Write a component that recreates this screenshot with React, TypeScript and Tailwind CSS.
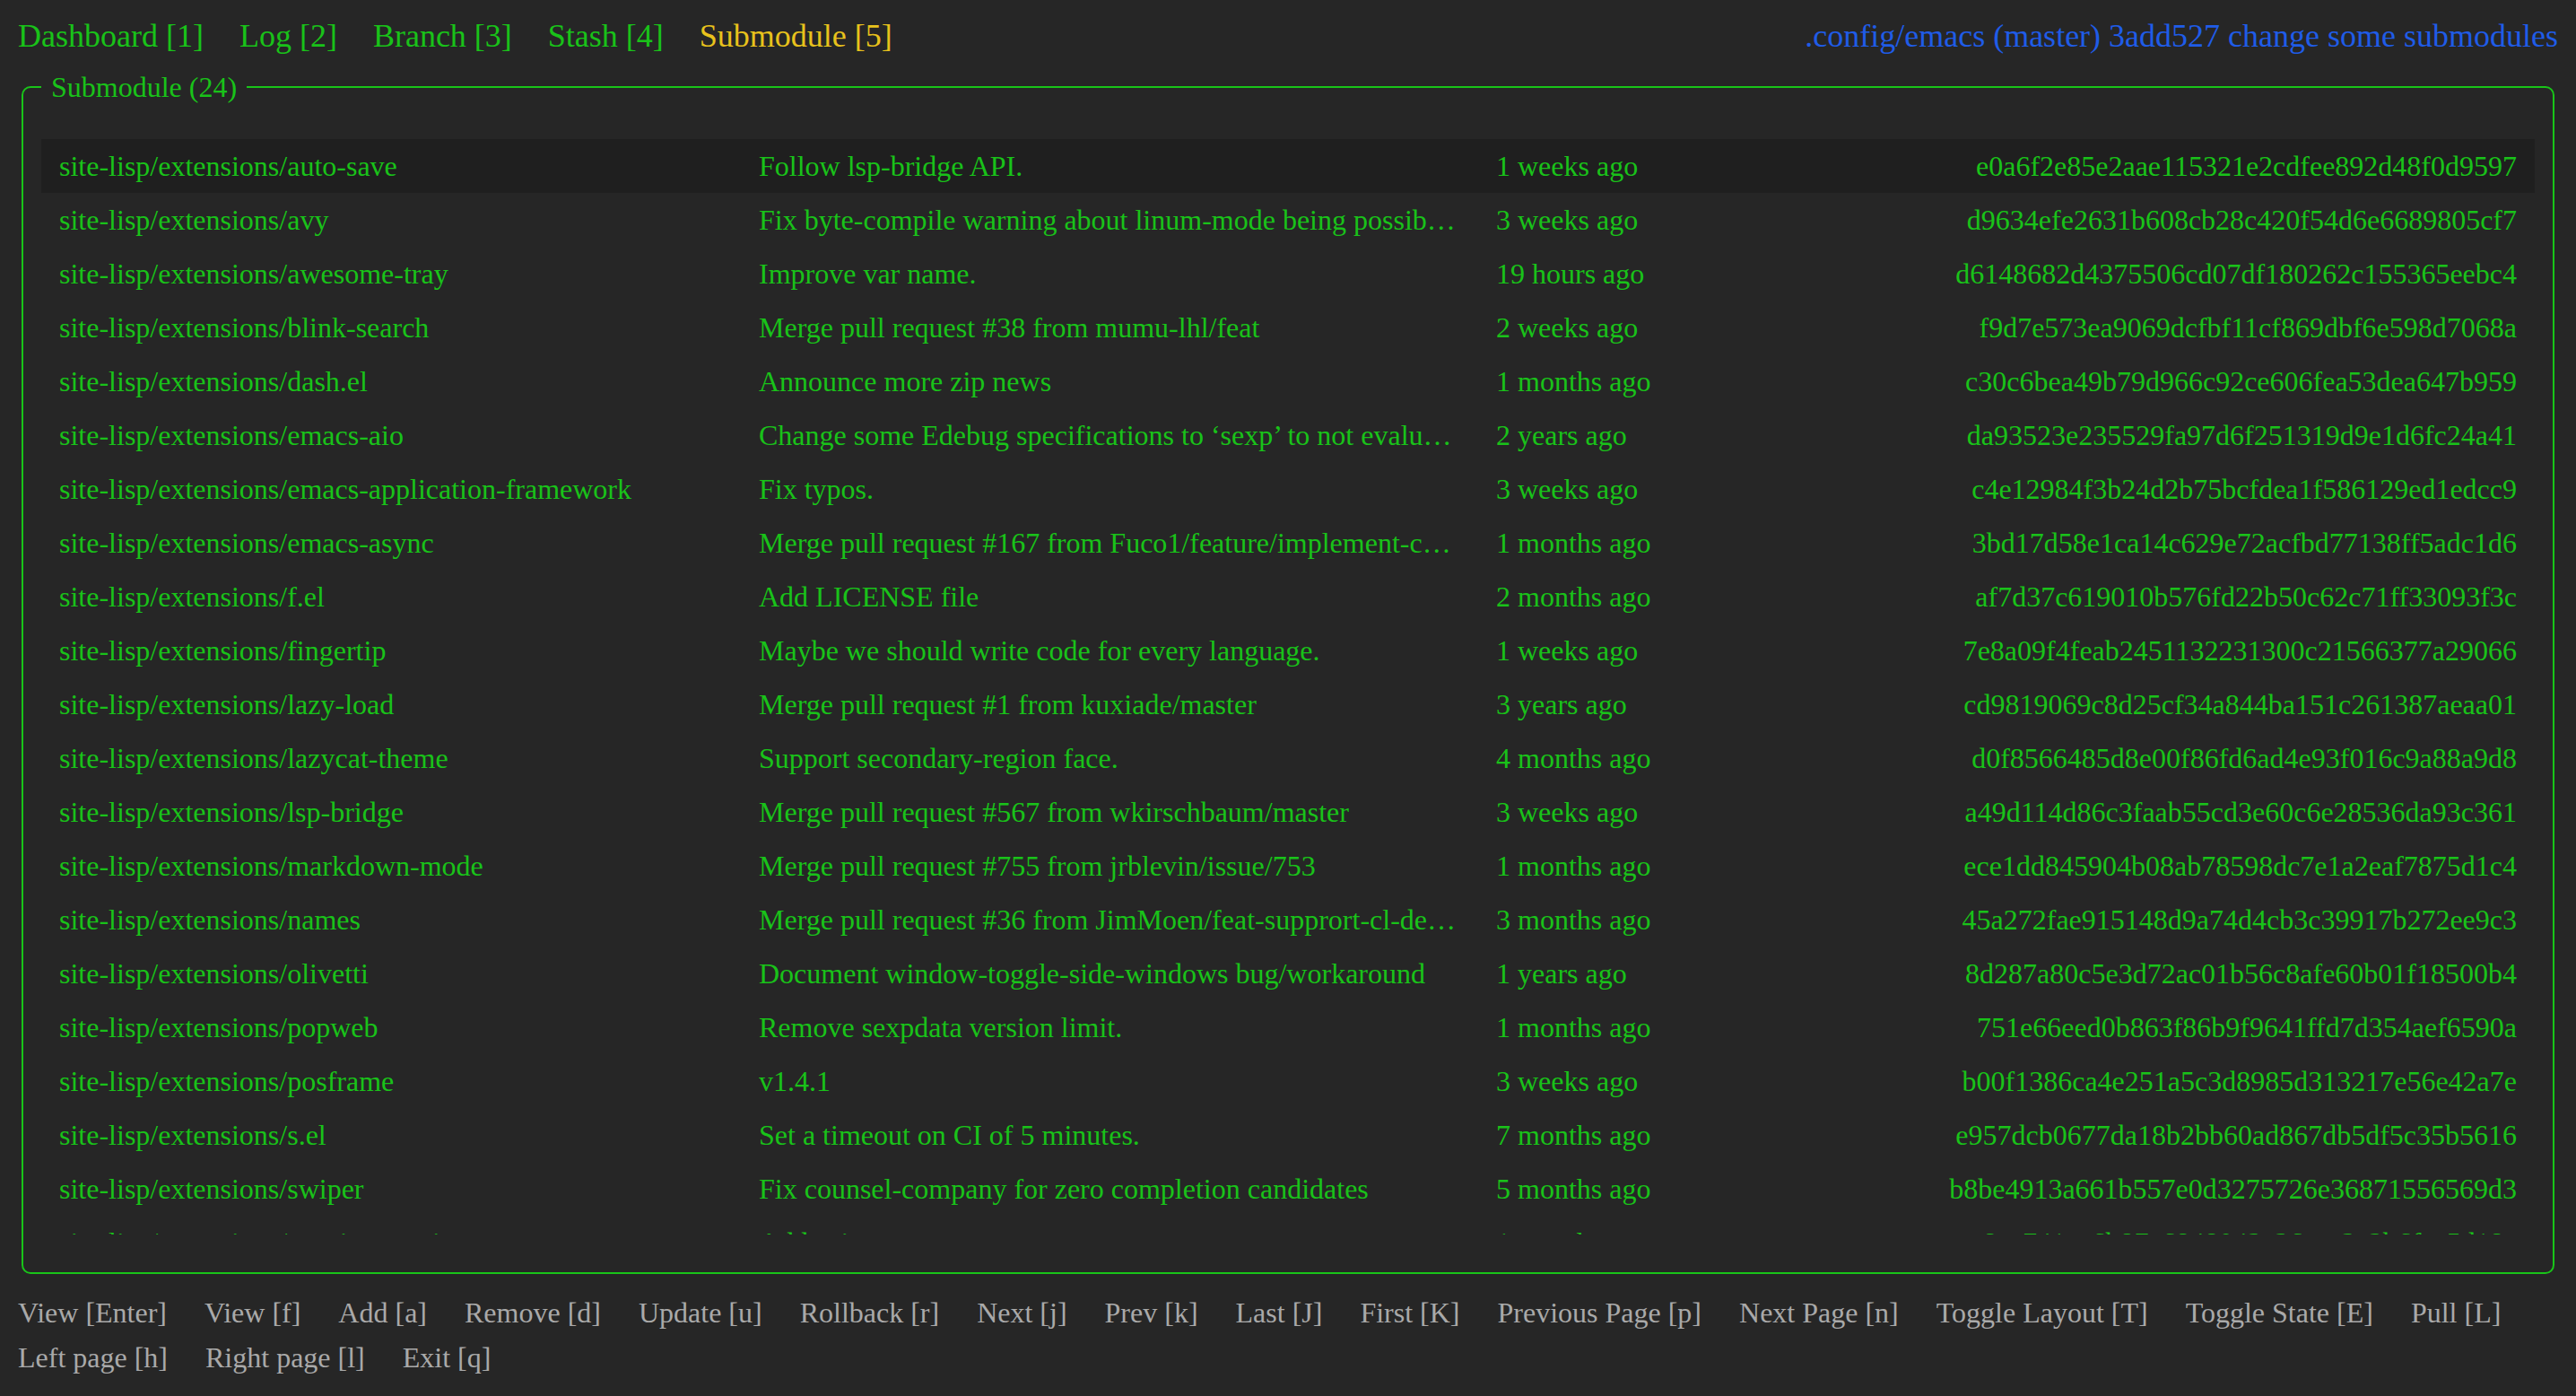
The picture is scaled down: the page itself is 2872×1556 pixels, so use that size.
import React from "react";

type Row = { path: string; msg: string; date: string; hash: string };

const rows: Row[] = [
  { path: "site-lisp/extensions/auto-save", msg: "Follow lsp-bridge API.", date: "1 weeks ago", hash: "e0a6f2e85e2aae115321e2cdfee892d48f0d9597" },
  { path: "site-lisp/extensions/avy", msg: "Fix byte-compile warning about linum-mode being possibly unavailable", date: "3 weeks ago", hash: "d9634efe2631b608cb28c420f54d6e6689805cf7" },
  { path: "site-lisp/extensions/awesome-tray", msg: "Improve var name.", date: "19 hours ago", hash: "d6148682d4375506cd07df180262c155365eebc4" },
  { path: "site-lisp/extensions/blink-search", msg: "Merge pull request #38 from mumu-lhl/feat", date: "2 weeks ago", hash: "f9d7e573ea9069dcfbf11cf869dbf6e598d7068a" },
  { path: "site-lisp/extensions/dash.el", msg: "Announce more zip news", date: "1 months ago", hash: "c30c6bea49b79d966c92ce606fea53dea647b959" },
  { path: "site-lisp/extensions/emacs-aio", msg: "Change some Edebug specifications to \u2018sexp\u2019 to not evaluate arguments", date: "2 years ago", hash: "da93523e235529fa97d6f251319d9e1d6fc24a41" },
  { path: "site-lisp/extensions/emacs-application-framework", msg: "Fix typos.", date: "3 weeks ago", hash: "c4e12984f3b24d2b75bcfdea1f586129ed1edcc9" },
  { path: "site-lisp/extensions/emacs-async", msg: "Merge pull request #167 from Fuco1/feature/implement-completion", date: "1 months ago", hash: "3bd17d58e1ca14c629e72acfbd77138ff5adc1d6" },
  { path: "site-lisp/extensions/f.el", msg: "Add LICENSE file", date: "2 months ago", hash: "af7d37c619010b576fd22b50c62c71ff33093f3c" },
  { path: "site-lisp/extensions/fingertip", msg: "Maybe we should write code for every language.", date: "1 weeks ago", hash: "7e8a09f4feab2451132231300c21566377a29066" },
  { path: "site-lisp/extensions/lazy-load", msg: "Merge pull request #1 from kuxiade/master", date: "3 years ago", hash: "cd9819069c8d25cf34a844ba151c261387aeaa01" },
  { path: "site-lisp/extensions/lazycat-theme", msg: "Support secondary-region face.", date: "4 months ago", hash: "d0f8566485d8e00f86fd6ad4e93f016c9a88a9d8" },
  { path: "site-lisp/extensions/lsp-bridge", msg: "Merge pull request #567 from wkirschbaum/master", date: "3 weeks ago", hash: "a49d114d86c3faab55cd3e60c6e28536da93c361" },
  { path: "site-lisp/extensions/markdown-mode", msg: "Merge pull request #755 from jrblevin/issue/753", date: "1 months ago", hash: "ece1dd845904b08ab78598dc7e1a2eaf7875d1c4" },
  { path: "site-lisp/extensions/names", msg: "Merge pull request #36 from JimMoen/feat-supprort-cl-defmethod", date: "3 months ago", hash: "45a272fae915148d9a74d4cb3c39917b272ee9c3" },
  { path: "site-lisp/extensions/olivetti", msg: "Document window-toggle-side-windows bug/workaround", date: "1 years ago", hash: "8d287a80c5e3d72ac01b56c8afe60b01f18500b4" },
  { path: "site-lisp/extensions/popweb", msg: "Remove sexpdata version limit.", date: "1 months ago", hash: "751e66eed0b863f86b9f9641ffd7d354aef6590a" },
  { path: "site-lisp/extensions/posframe", msg: "v1.4.1", date: "3 weeks ago", hash: "b00f1386ca4e251a5c3d8985d313217e56e42a7e" },
  { path: "site-lisp/extensions/s.el", msg: "Set a timeout on CI of 5 minutes.", date: "7 months ago", hash: "e957dcb0677da18b2bb60ad867db5df5c35b5616" },
  { path: "site-lisp/extensions/swiper", msg: "Fix counsel-company for zero completion candidates", date: "5 months ago", hash: "b8be4913a661b557e0d3275726e36871556569d3" },
  { path: "site-lisp/extensions/yasnippet-snippets", msg: "Add snippets", date: "1 months ago", hash: "c8ce741ec6b87e6848043a26cca2c3b6fcc5d18a" },
  { path: "site-lisp/extensions/yasnippet", msg: "Fix docs", date: "2 months ago", hash: "a1b2c3d4e5f60718293a4b5c6d7e8f9012345678" },
];

const tabs = ["Dashboard [1]", "Log [2]", "Branch [3]", "Stash [4]"];

const keys = [
  "View [Enter]",
  "View [f]",
  "Add [a]",
  "Remove [d]",
  "Update [u]",
  "Rollback [r]",
  "Next [j]",
  "Prev [k]",
  "Last [J]",
  "First [K]",
  "Previous Page [p]",
  "Next Page [n]",
  "Toggle Layout [T]",
  "Toggle State [E]",
  "Pull [L]",
  "Left page [h]",
  "Right page [l]",
  "Exit [q]",
];

export default function App() {
  return (
    <div
      className="min-h-screen w-full bg-[#262626] px-[20px]"
      style={{ fontFamily: '"Liberation Serif", "Times New Roman", serif' }}
    >
      <header className="flex h-[77px] items-center justify-between pt-[3px] text-[36px] leading-[44px]">
        <div className="flex gap-x-[40px]">
          {tabs.map((t) => (
            <span key={t} className="text-[#19c219]">
              {t}
            </span>
          ))}
          <span className="text-[#e8c21c]">Submodule [5]</span>
        </div>
        <span className="text-[#1f5ce8]">.config/emacs (master) 3add527 change some submodules</span>
      </header>

      <fieldset className="mx-[4px] rounded-[10px] border-2 border-[#19c419] px-[20px] pb-[42px]">
        <legend className="px-[11px] text-[32px] leading-[40px] text-[#19c219]">Submodule (24)</legend>
        <div className="mt-[38px] h-[1221px] overflow-hidden">
          {rows.map((r, i) => (
            <div
              key={r.path}
              className={
                "flex h-[60px] items-center whitespace-nowrap px-[20px] text-[32px] leading-[60px] text-[#19c219] " +
                (i === 0 ? "bg-[#1f1f1f]" : "")
              }
            >
              <span className="w-[780px] shrink-0 overflow-hidden">{r.path}</span>
              <span className="w-[780px] shrink-0 overflow-hidden text-ellipsis">{r.msg}</span>
              <span className="ml-[42px] flex-1">{r.date}</span>
              <span className="text-right">{r.hash}</span>
            </div>
          ))}
        </div>
      </fieldset>

      <footer className="mt-[18px] flex flex-wrap gap-x-[42px] text-[32px] leading-[50px] text-[#a9a9a9]">
        {keys.map((k) => (
          <span key={k}>{k}</span>
        ))}
      </footer>
    </div>
  );
}
